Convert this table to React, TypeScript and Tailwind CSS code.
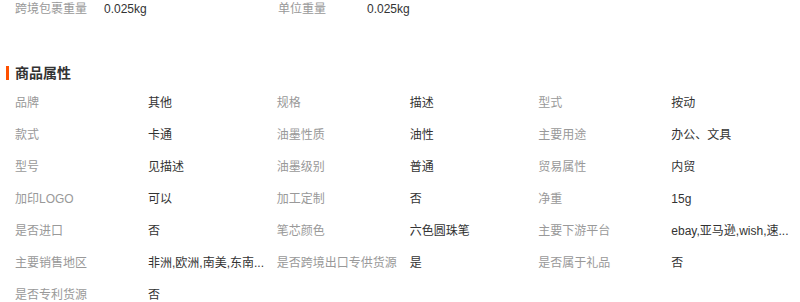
const rows: [string, string][][] = [
  [["品牌", "其他"], ["规格", "描述"], ["型式", "按动"]],
  [["款式", "卡通"], ["油墨性质", "油性"], ["主要用途", "办公、文具"]],
  [["型号", "见描述"], ["油墨级别", "普通"], ["贸易属性", "内贸"]],
  [["加印LOGO", "可以"], ["加工定制", "否"], ["净重", "15g"]],
  [["是否进口", "否"], ["笔芯颜色", "六色圆珠笔"], ["主要下游平台", "ebay,亚马逊,wish,速..."]],
  [["主要销售地区", "非洲,欧洲,南美,东南..."], ["是否跨境出口专供货源", "是"], ["是否属于礼品", "否"]],
  [["是否专利货源", "否"]],
];

export default function App() {
  return (
    <div
      className="w-[800px] h-[302px] overflow-hidden bg-white text-[12px]"
      style={{ fontFamily: '"Liberation Sans", "Noto Sans CJK SC", sans-serif' }}
    >
      <div className="flex h-[18px] items-center pl-[15px]">
        <div className="flex w-[263px]">
          <span className="w-[89px] text-[#999]">跨境包裹重量</span>
          <span className="text-[#333]">0.025kg</span>
        </div>
        <div className="flex w-[263px]">
          <span className="w-[89px] text-[#999]">单位重量</span>
          <span className="text-[#333]">0.025kg</span>
        </div>
      </div>

      <div className="mt-[45px] flex h-[20px] items-center pl-[6px]">
        <span className="mr-[6px] h-[14px] w-[3px] bg-[#ff5000]" />
        <span className="text-[14px] font-bold text-[#333]">商品属性</span>
      </div>

      <div className="mt-[4px] pl-[15px]">
        {rows.map((row, i) => (
          <div key={i} className="flex h-[32px] items-center">
            {row.map(([label, value]) => (
              <div key={label} className="flex w-[263px]">
                <span className="w-[133px] whitespace-nowrap text-[#999]">{label}</span>
                <span className="whitespace-nowrap text-[#333]">{value}</span>
              </div>
            ))}
          </div>
        ))}
      </div>
    </div>
  );
}
